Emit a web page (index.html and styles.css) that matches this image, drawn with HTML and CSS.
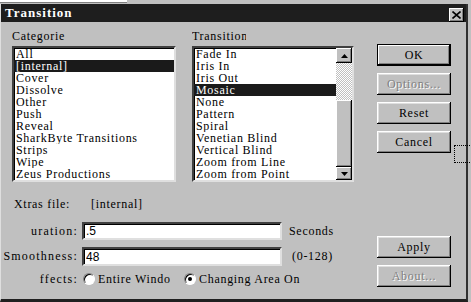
FILE: index.html
```html
<!doctype html>
<html lang="en">
  <head>
    <meta charset="UTF-8" />
    <title>Transition</title>
    <link rel="stylesheet" href="styles.css">
  </head>
  <body>
    <div class="top-strip"><span class="top-white"></span></div>
    <div class="window">
      <div class="titlebar">
        <span class="title">Transition</span>
        <span class="close">
          <svg width="9" height="8" viewBox="0 0 9 8">
            <path d="M0.5 0.5 L8.5 7.5 M8.5 0.5 L0.5 7.5" stroke="#000" stroke-width="1.6" />
          </svg>
        </span>
      </div>

      <div class="content">
        <div class="main">
          <div class="lists">
            <div class="group">
              <div class="label">Categorie</div>
              <ul class="listbox cat-list">
                <li>All</li>
                <li class="selected">[internal]</li>
                <li>Cover</li>
                <li>Dissolve</li>
                <li>Other</li>
                <li>Push</li>
                <li>Reveal</li>
                <li>SharkByte Transitions</li>
                <li>Strips</li>
                <li>Wipe</li>
                <li>Zeus Productions</li>
              </ul>
            </div>
            <div class="group">
              <div class="label clipped">Transition</div>
              <div class="listbox trans-list">
                <ul>
                  <li>Fade In</li>
                  <li>Iris In</li>
                  <li>Iris Out</li>
                  <li class="selected">Mosaic</li>
                  <li>None</li>
                  <li>Pattern</li>
                  <li>Spiral</li>
                  <li>Venetian Blind</li>
                  <li>Vertical Blind</li>
                  <li>Zoom from Line</li>
                  <li>Zoom from Point</li>
                </ul>
                <div class="scrollbar">
                  <span class="arrow up">
                    <svg width="7" height="4" viewBox="0 0 7 4"><path d="M3.5 0 L7 4 L0 4 Z" fill="#000" /></svg>
                  </span>
                  <span class="track"></span>
                  <span class="thumb"></span>
                  <span class="arrow down">
                    <svg width="7" height="4" viewBox="0 0 7 4"><path d="M0 0 L7 0 L3.5 4 Z" fill="#000" /></svg>
                  </span>
                </div>
              </div>
            </div>
          </div>

          <div class="lower">
            <div class="xtras-row">
              <span>Xtras file:</span>
              <span class="xtras-value">[internal]</span>
            </div>
            <div class="field-row">
              <span class="field-label">uration:</span>
              <input class="field" type="text" value=".5" />
              <span class="unit">Seconds</span>
            </div>
            <div class="field-row tall">
              <span class="field-label">Smoothness:</span>
              <input class="field" type="text" value="48" />
              <span class="unit range">(0-128)</span>
            </div>
            <div class="effects-row">
              <span class="field-label">ffects:</span>
              <span class="radio"></span>
              <span class="radio-text clip-text">Entire Window</span>
              <span class="radio checked"></span>
              <span class="radio-text">Changing Area On</span>
            </div>
          </div>
        </div>

        <div class="buttons">
          <button class="btn default">OK</button>
          <button class="btn disabled">Options...</button>
          <button class="btn">Reset</button>
          <button class="btn">Cancel</button>
          <button class="btn push-down">Apply</button>
          <button class="btn disabled">About...</button>
        </div>
      </div>
    </div>
    <div class="focus-rect"></div>
  </body>
</html>
```

FILE: styles.css
```css
body {
  margin: 0;
  width: 471px;
  height: 302px;
  overflow: hidden;
  background-color: #c0c0c0;
  font-family: 'Liberation Serif', 'Times New Roman', serif;
  font-size: 12px;
  letter-spacing: 0.7px;
  color: #000;
  position: relative;
}
.top-strip {
  height: 4px;
  background-color: #c0c0c0;
}
.top-white {
  display: block;
  width: 127px;
  height: 2px;
  background-color: #fff;
  border-bottom: 1px solid #808080;
}
.window {
  width: 465px;
  height: 295px;
  border-left: 1px solid #dfdfdf;
  border-right: 2px solid #303030;
  border-bottom: 3px solid #202020;
  background-color: #c0c0c0;
}
.titlebar {
  height: 18px;
  background-color: #1e1e1e;
  display: flex;
  align-items: center;
  justify-content: space-between;
  padding: 0 2px 0 4px;
}
.title {
  color: #fff;
  font-weight: bold;
  font-size: 13px;
  letter-spacing: 1px;
  line-height: 18px;
}
.close {
  width: 15px;
  height: 14px;
  box-sizing: border-box;
  background-color: #c0c0c0;
  box-shadow: inset -1px -1px #000, inset 1px 1px #fff, inset -2px -2px #808080;
  display: flex;
  align-items: center;
  justify-content: center;
  margin-top: 3px;
}
.content {
  display: flex;
  padding: 8px 0 0 11px;
}
.main {
  width: 364px;
}
.lists {
  display: flex;
  gap: 16px;
}
.label {
  height: 12px;
  line-height: 12px;
  margin-bottom: 4px;
}
.label.clipped {
  width: 54px;
  overflow: hidden;
  white-space: nowrap;
}
.listbox {
  margin: 0;
  padding: 0;
  list-style: none;
  background-color: #fff;
  border: 2px solid;
  border-color: #404040 #dfdfdf #dfdfdf #404040;
  box-shadow: inset 1px 1px #000;
}
.listbox li {
  height: 12px;
  line-height: 13px;
  padding-left: 2px;
  white-space: nowrap;
  overflow: hidden;
}
.listbox li.selected {
  background-color: #1a1a1a;
  color: #fff;
}
.cat-list {
  width: 160px;
}
.trans-list {
  width: 158px;
  display: flex;
}
.trans-list ul {
  flex: 1;
  margin: 0;
  padding: 0;
  list-style: none;
}
.scrollbar {
  width: 16px;
  display: flex;
  flex-direction: column;
}
.arrow,
.thumb {
  background-color: #c0c0c0;
  box-shadow: inset -1px -1px #000, inset 1px 1px #fff, inset -2px -2px #808080;
  display: flex;
  align-items: center;
  justify-content: center;
}
.arrow {
  height: 15px;
}
.arrow.down {
  height: 13px;
}
.track {
  height: 37px;
  background: repeating-conic-gradient(#fff 0 25%, #c0c0c0 0 50%) 0 0 / 2px 2px;
}
.thumb {
  height: 67px;
}
.lower {
  margin-left: -11px;
}
.xtras-row {
  margin-top: 16px;
  padding-left: 13px;
  height: 12px;
  line-height: 12px;
  display: flex;
}
.xtras-value {
  margin-left: 21px;
}
.field-row {
  display: flex;
  align-items: center;
  margin-top: 12px;
  height: 18px;
}
.field-row.tall {
  margin-top: 7px;
  height: 19px;
}
.field-label {
  width: 77px;
  flex: none;
  display: flex;
  justify-content: flex-end;
  overflow: hidden;
  white-space: nowrap;
  letter-spacing: 1.2px;
}
.field {
  width: 200px;
  height: 100%;
  box-sizing: border-box;
  margin: 0 0 0 4px;
  padding: 0 2px;
  border: 2px solid;
  border-color: #404040 #dfdfdf #dfdfdf #404040;
  box-shadow: inset 1px 1px #000;
  background-color: #fff;
  font-family: 'Liberation Sans', Arial, sans-serif;
  font-size: 12px;
  letter-spacing: 0;
  outline: none;
}
.unit {
  margin-left: 7px;
}
.unit.range {
  margin-left: 10px;
}
.effects-row {
  display: flex;
  align-items: center;
  margin-top: 7px;
  height: 12px;
}
.radio {
  width: 12px;
  height: 12px;
  box-sizing: border-box;
  border-radius: 50%;
  background-color: #fff;
  border: 1px solid;
  border-color: #808080 #fff #fff #808080;
  box-shadow: inset 1px 1px #000;
  margin-left: 5px;
  flex: none;
  display: flex;
  align-items: center;
  justify-content: center;
}
.radio.checked {
  margin-left: 14px;
}
.radio.checked::after {
  content: '';
  width: 4px;
  height: 4px;
  border-radius: 50%;
  background-color: #000;
}
.radio-text {
  margin-left: 3px;
  white-space: nowrap;
}
.clip-text {
  width: 72px;
  overflow: hidden;
}
.buttons {
  width: 74px;
  height: 243px;
  margin-left: 1px;
  padding-top: 14px;
  display: flex;
  flex-direction: column;
  gap: 7px;
}
.btn {
  height: 22px;
  width: 74px;
  flex: none;
  padding: 0;
  border: none;
  background-color: #c0c0c0;
  box-shadow: inset -1px -1px #000, inset 1px 1px #fff, inset -2px -2px #808080, inset 2px 2px #dfdfdf;
  font-family: inherit;
  font-size: 12px;
  letter-spacing: 0.7px;
  color: #000;
}
.btn.default {
  box-shadow: inset 0 0 0 1px #000, inset -2px -2px #000, inset 2px 2px #fff, inset -3px -3px #808080;
}
.btn.disabled {
  color: #808080;
  text-shadow: 1px 1px #fff;
}
.btn.push-down {
  margin-top: auto;
}
.focus-rect {
  position: absolute;
  left: 454px;
  top: 145px;
  width: 20px;
  height: 16px;
  border: 1px dotted #000;
}
```
